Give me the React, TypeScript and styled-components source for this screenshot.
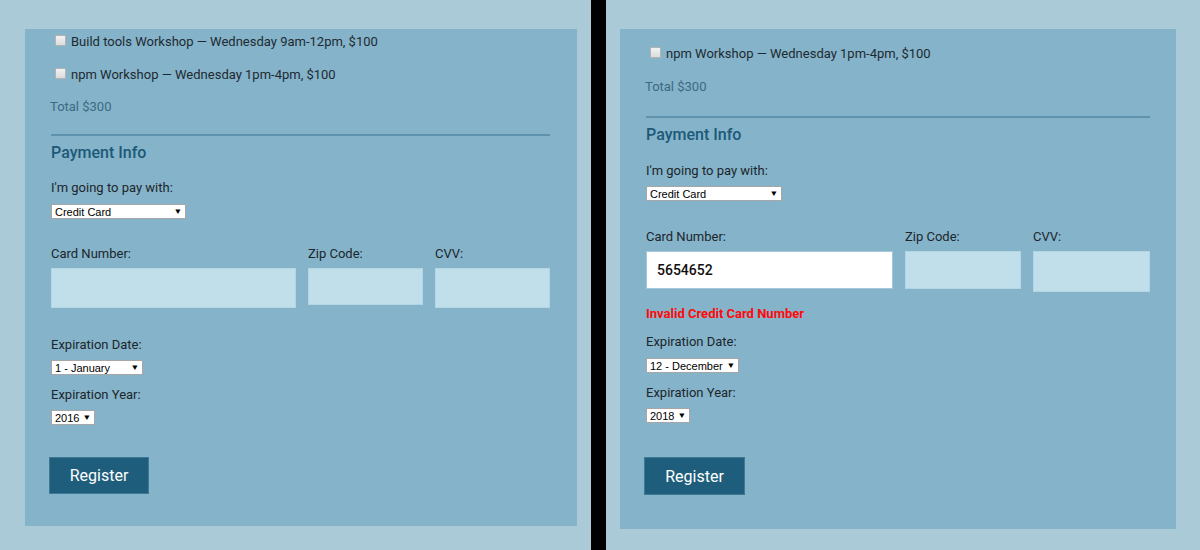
import React from "react";
import styled, { createGlobalStyle } from "styled-components";

const Global = createGlobalStyle`
  html, body { margin: 0; padding: 0; }
  body {
    background: #aacad7;
    font-family: Roboto, "Liberation Sans", Arial, sans-serif;
    width: 1200px;
    height: 550px;
    overflow: hidden;
  }
`;

const Stage = styled.div`
  display: flex;
  width: 1200px;
  height: 550px;
`;

const Half = styled.div<{ $w: number; $padL: number; $padR: number }>`
  width: ${(p) => p.$w}px;
  flex: none;
  padding: 29px ${(p) => p.$padR}px 0 ${(p) => p.$padL}px;
  box-sizing: border-box;
`;

const Divider = styled.div`
  width: 15px;
  flex: none;
  background: #000;
`;

const Panel = styled.div<{ $h: number; $padTop: number }>`
  background: #84b3ca;
  height: ${(p) => p.$h}px;
  padding: ${(p) => p.$padTop}px 0 0 26px;
  box-sizing: border-box;
  display: flex;
  flex-direction: column;
  align-items: flex-start;
`;

const CheckRow = styled.div<{ $mt?: number }>`
  display: flex;
  align-items: center;
  height: 22px;
  margin-top: ${(p) => p.$mt ?? 0}px;
  padding-left: 4px;
  gap: 5px;
  font-size: 13px;
  color: #1f2a30;
`;

const Box = styled.span`
  width: 9px;
  height: 9px;
  background: linear-gradient(#f2f2f2, #dcdcdc);
  border: 1px solid #b3b3b3;
  border-radius: 1px;
  flex: none;
  margin-top: -2px;
`;

const Total = styled.div<{ $mt: number }>`
  height: 22px;
  line-height: 22px;
  margin-top: ${(p) => p.$mt}px;
  margin-left: -1px;
  font-size: 13px;
  color: #3d6a82;
`;

const Rule = styled.hr<{ $mt: number; $w: number }>`
  width: ${(p) => p.$w}px;
  height: 2px;
  border: 0;
  margin: ${(p) => p.$mt}px 0 0 0;
  background: #5f92ad;
`;

const Heading = styled.h2<{ $mt: number }>`
  margin: ${(p) => p.$mt}px 0 0 0;
  height: 24px;
  line-height: 24px;
  font-size: 16px;
  font-weight: 500;
  color: #1d5977;
`;

const Label = styled.div<{ $mt?: number }>`
  margin-top: ${(p) => p.$mt ?? 0}px;
  height: 20px;
  line-height: 20px;
  font-size: 13px;
  color: #1d262b;
`;

const Select = styled.div<{ $w: number; $mt: number }>`
  margin-top: ${(p) => p.$mt}px;
  width: ${(p) => p.$w}px;
  height: 15px;
  box-sizing: border-box;
  background: #fff;
  border: 1px solid #a6a6a6;
  display: flex;
  align-items: center;
  justify-content: space-between;
  padding: 0 3px 0 3px;
  font-family: "Liberation Sans", Arial, sans-serif;
  font-size: 11px;
  color: #000;
`;

const Arrow = styled.span`
  font-size: 8px;
  line-height: 1;
  transform: scaleX(1.1);
`;

const FieldGrid = styled.div<{ $cols: string; $mt: number }>`
  margin-top: ${(p) => p.$mt}px;
  display: grid;
  grid-template-columns: ${(p) => p.$cols};
  column-gap: 12px;
  align-items: start;
`;

const Field = styled.div`
  display: flex;
  flex-direction: column;
  gap: 4px;
`;

const Input = styled.div<{ $h: number; $filled?: boolean }>`
  height: ${(p) => p.$h}px;
  box-sizing: border-box;
  border: 1px solid ${(p) => (p.$filled ? "#a4c8d9" : "#b4d6e4")};
  background: ${(p) => (p.$filled ? "#ffffff" : "#c1dfea")};
  display: flex;
  align-items: center;
  padding-left: 10px;
  font-size: 14px;
  font-weight: 500;
  color: #111;
`;

const ErrorText = styled.div<{ $mt: number }>`
  margin-top: ${(p) => p.$mt}px;
  height: 18px;
  line-height: 18px;
  font-size: 13px;
  font-weight: 700;
  color: #ff0a0a;
`;

const Button = styled.button<{ $mt: number; $w: number; $h: number }>`
  margin: ${(p) => p.$mt}px 0 0 -2px;
  width: ${(p) => p.$w}px;
  height: ${(p) => p.$h}px;
  background: #1e5e7c;
  border: 1px solid #3b7994;
  color: #fff;
  font-family: Roboto, sans-serif;
  font-size: 16px;
  padding: 0;
`;

export default function App() {
  return (
    <>
      <Global />
      <Stage>
        <Half $w={591} $padL={25} $padR={14}>
          <Panel $h={497} $padTop={1}>
            <CheckRow>
              <Box />
              Build tools Workshop — Wednesday 9am-12pm, $100
            </CheckRow>
            <CheckRow $mt={11}>
              <Box />
              npm Workshop — Wednesday 1pm-4pm, $100
            </CheckRow>
            <Total $mt={11}>Total $300</Total>
            <Rule $mt={16} $w={499} />
            <Heading $mt={5}>Payment Info</Heading>
            <Label $mt={13}>I'm going to pay with:</Label>
            <Select $w={135} $mt={6}>
              Credit Card<Arrow>▼</Arrow>
            </Select>
            <FieldGrid $cols="245px 115px 115px" $mt={25}>
              <Field>
                <Label>Card Number:</Label>
                <Input $h={40} />
              </Field>
              <Field>
                <Label>Zip Code:</Label>
                <Input $h={37} />
              </Field>
              <Field>
                <Label>CVV:</Label>
                <Input $h={40} />
              </Field>
            </FieldGrid>
            <Label $mt={27}>Expiration Date:</Label>
            <Select $w={92} $mt={5}>
              1 - January<Arrow>▼</Arrow>
            </Select>
            <Label $mt={10}>Expiration Year:</Label>
            <Select $w={44} $mt={5}>
              2016<Arrow>▼</Arrow>
            </Select>
            <Button $mt={32} $w={100} $h={37}>
              Register
            </Button>
          </Panel>
        </Half>
        <Divider />
        <Half $w={594} $padL={14} $padR={24}>
          <Panel $h={500} $padTop={13}>
            <CheckRow>
              <Box />
              npm Workshop — Wednesday 1pm-4pm, $100
            </CheckRow>
            <Total $mt={12}>Total $300</Total>
            <Rule $mt={18} $w={504} />
            <Heading $mt={5}>Payment Info</Heading>
            <Label $mt={14}>I'm going to pay with:</Label>
            <Select $w={136} $mt={5}>
              Credit Card<Arrow>▼</Arrow>
            </Select>
            <FieldGrid $cols="247px 116px 117px" $mt={26}>
              <Field>
                <Label>Card Number:</Label>
                <Input $h={38} $filled>
                  5654652
                </Input>
              </Field>
              <Field>
                <Label>Zip Code:</Label>
                <Input $h={38} />
              </Field>
              <Field>
                <Label>CVV:</Label>
                <Input $h={41} />
              </Field>
            </FieldGrid>
            <ErrorText $mt={13}>Invalid Credit Card Number</ErrorText>
            <Label $mt={9}>Expiration Date:</Label>
            <Select $w={93} $mt={6}>
              12 - December<Arrow>▼</Arrow>
            </Select>
            <Label $mt={10}>Expiration Year:</Label>
            <Select $w={44} $mt={5}>
              2018<Arrow>▼</Arrow>
            </Select>
            <Button $mt={34} $w={101} $h={38}>
              Register
            </Button>
          </Panel>
        </Half>
      </Stage>
    </>
  );
}
